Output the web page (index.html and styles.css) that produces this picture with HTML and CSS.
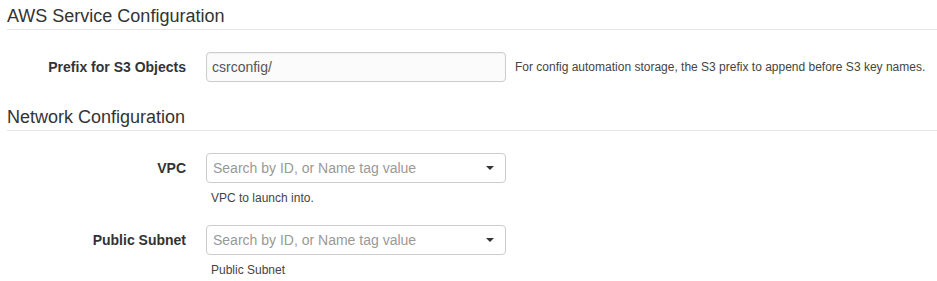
FILE: index.html
```html
<!DOCTYPE html>
<html lang="en">
<head>
    <meta charset="UTF-8">
    <meta name="viewport" content="width=device-width, initial-scale=1.0">
    <title>Stack Parameters</title>
    <link rel="stylesheet" href="styles.css">
</head>
<body>
    <div class="params-page">
        <h3 class="section-title">AWS Service Configuration</h3>

        <div class="form-row">
            <label class="form-label">Prefix for S3 Objects</label>
            <div class="form-field">
                <input type="text" class="form-input" value="csrconfig/">
            </div>
            <span class="help-inline">For config automation storage, the S3 prefix to append before S3 key names.</span>
        </div>

        <h3 class="section-title">Network Configuration</h3>

        <div class="form-row">
            <label class="form-label">VPC</label>
            <div class="form-field">
                <div class="form-select">
                    <span class="select-placeholder">Search by ID, or Name tag value</span>
                    <span class="select-caret"></span>
                </div>
                <div class="help-block">VPC to launch into.</div>
            </div>
        </div>

        <div class="form-row">
            <label class="form-label">Public Subnet</label>
            <div class="form-field">
                <div class="form-select">
                    <span class="select-placeholder">Search by ID, or Name tag value</span>
                    <span class="select-caret"></span>
                </div>
                <div class="help-block">Public Subnet</div>
            </div>
        </div>
    </div>
</body>
</html>
```

FILE: styles.css
```css
* {
    margin: 0;
    padding: 0;
    box-sizing: border-box;
}

body {
    font-family: "Liberation Sans", Arial, sans-serif;
    background: #fff;
    color: #333;
}

.params-page {
    padding-left: 7px;
}

.section-title {
    font-size: 18px;
    font-weight: normal;
    line-height: 20px;
    color: #333;
    padding: 6px 0 3px;
    border-bottom: 1px solid #e5e5e5;
    margin-bottom: 22px;
}

.form-row {
    display: flex;
    align-items: flex-start;
    margin-bottom: 19px;
}

.form-row:last-child {
    margin-bottom: 0;
}

.form-label {
    width: 179px;
    margin-right: 20px;
    text-align: right;
    font-size: 14px;
    font-weight: bold;
    line-height: 30px;
    color: #333;
}

.form-field {
    width: 300px;
}

.form-input {
    display: block;
    width: 300px;
    height: 30px;
    padding: 0 5px;
    font-family: "Liberation Sans", Arial, sans-serif;
    font-size: 14px;
    color: #555;
    background: #fbfbfb;
    border: 1px solid #ccc;
    border-radius: 4px;
    box-shadow: inset 0 1px 1px rgba(0, 0, 0, 0.04);
}

.form-input:focus {
    outline: none;
    border-color: #66afe9;
}

.form-select {
    display: flex;
    align-items: center;
    justify-content: space-between;
    height: 30px;
    padding: 0 11px 0 6px;
    background: #fff;
    border: 1px solid #ccc;
    border-radius: 4px;
    cursor: pointer;
}

.select-placeholder {
    font-size: 14px;
    color: #999;
}

.select-caret {
    width: 0;
    height: 0;
    border-left: 4px solid transparent;
    border-right: 4px solid transparent;
    border-top: 4px solid #333;
}

.help-inline {
    margin-left: 9px;
    font-size: 12px;
    line-height: 30px;
    color: #444;
}

.help-block {
    margin: 7px 0 0 5px;
    font-size: 12px;
    line-height: 16px;
    color: #444;
}
```
